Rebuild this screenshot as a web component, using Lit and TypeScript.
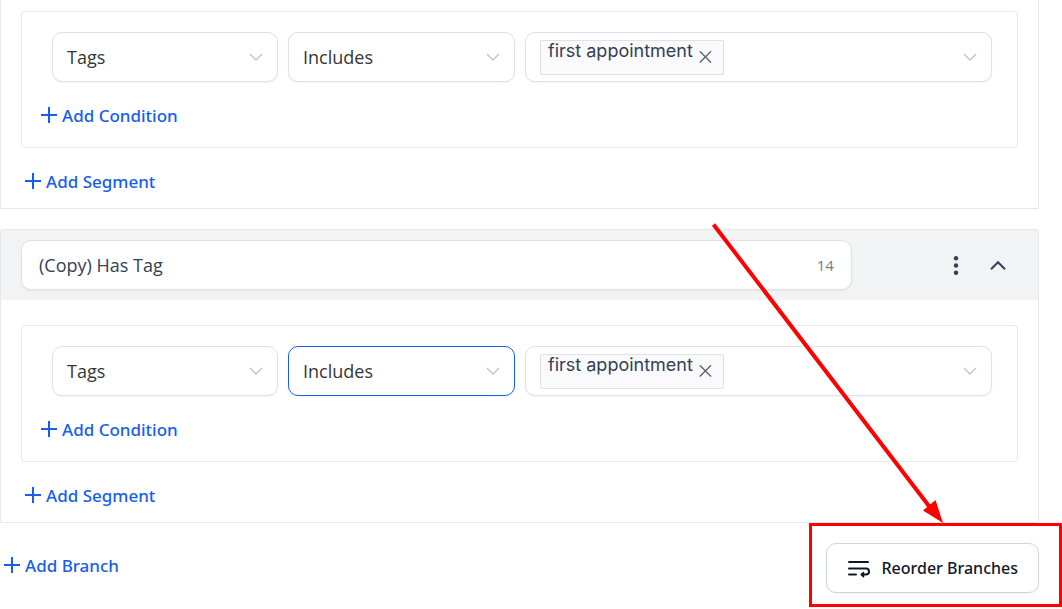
import { LitElement, html, css, svg, nothing } from "lit";
import { customElement, property } from "lit/decorators.js";

const chevronDown = svg`<path d="M1 1l6 6 6-6" />`;

@customElement("add-link")
export class AddLink extends LitElement {
  @property() label = "";

  static styles = css`
    :host {
      display: block;
    }
    .add {
      display: flex;
      align-items: center;
      gap: 5px;
      height: 27px;
      padding: 0;
      border: 0;
      background: none;
      color: #155eef;
      font: 500 17px/27px "Noto Sans", "Open Sans", sans-serif;
      cursor: pointer;
    }
    .plus {
      width: 16px;
      height: 18px;
      fill: none;
      stroke: currentColor;
      stroke-width: 2;
    }
  `;

  render() {
    return html`<button class="add" type="button">
      <svg class="plus" viewBox="0 0 16 18" aria-hidden="true">
        <path d="M8 0v16M0 8h16" />
      </svg>
      <span>${this.label}</span>
    </button>`;
  }
}

@customElement("select-field")
export class SelectField extends LitElement {
  @property() label = "";
  @property() value = "";
  @property({ type: Boolean }) active = false;

  static styles = css`
    :host {
      display: block;
    }
    .field {
      display: grid;
      align-items: center;
    }
    .select {
      grid-area: 1 / 1;
      appearance: none;
      box-sizing: border-box;
      width: 100%;
      height: 50px;
      padding: 0 40px 0 14px;
      border: 1px solid #e0e0e6;
      border-radius: 10px;
      background: #fff;
      box-shadow: 0 1px 2px rgba(16, 24, 40, 0.05);
      color: #333639;
      font: 400 18px/26px "Open Sans", "Noto Sans", sans-serif;
      outline: none;
    }
    .select.active {
      border-color: #155eef;
    }
    .chevron {
      grid-area: 1 / 1;
      justify-self: end;
      width: 14px;
      height: 8px;
      margin-right: 15px;
      fill: none;
      stroke: #c2c2c2;
      stroke-width: 1.3;
      pointer-events: none;
    }
  `;

  render() {
    return html`<div class="field">
      <select class="select ${this.active ? "active" : ""}" aria-label=${this.label}>
        <option selected>${this.value}</option>
      </select>
      <svg class="chevron" viewBox="0 0 14 8" aria-hidden="true">${chevronDown}</svg>
    </div>`;
  }
}

@customElement("tag-field")
export class TagField extends LitElement {
  @property() value = "";

  static styles = css`
    :host {
      display: block;
    }
    .field {
      display: flex;
      align-items: center;
      justify-content: space-between;
      box-sizing: border-box;
      height: 50px;
      padding: 0 14px;
      border: 1px solid #e0e0e6;
      border-radius: 10px;
      background: #fff;
      box-shadow: 0 1px 2px rgba(16, 24, 40, 0.05);
    }
    .tag {
      display: flex;
      gap: 6px;
      box-sizing: border-box;
      height: 35px;
      padding: 0 11px 0 7px;
      border: 1px solid #e0e0e6;
      border-radius: 2px;
      background: #fafafc;
      color: #344054;
      font: 400 18px/20px "Inter", "Roboto", sans-serif;
    }
    .remove,
    .open {
      display: flex;
      align-items: center;
      padding: 0;
      border: 0;
      background: none;
      cursor: pointer;
    }
    .cross {
      width: 13px;
      height: 13px;
      fill: none;
      stroke: #606266;
      stroke-width: 1.4;
    }
    .chevron {
      width: 14px;
      height: 8px;
      fill: none;
      stroke: #c2c2c2;
      stroke-width: 1.3;
    }
  `;

  render() {
    return html`<div class="field">
      <span class="tag">
        <span>${this.value}</span>
        <button class="remove" type="button" aria-label="Remove">
          <svg class="cross" viewBox="0 0 13 13" aria-hidden="true">
            <path d="M.8 .3l11.200 11.200M12 .3L.8 11.500" />
          </svg>
        </button>
      </span>
      <button class="open" type="button" aria-label="Open tags">
        <svg class="chevron" viewBox="0 0 14 8" aria-hidden="true">${chevronDown}</svg>
      </button>
    </div>`;
  }
}

@customElement("branch-card")
export class BranchCard extends LitElement {
  @property() name = "";
  @property({ type: Boolean }) active = false;

  static styles = css`
    :host {
      display: block;
    }
    .card {
      border: 1px solid #e4e7ec;
      border-radius: 2px;
    }
    .card.continued {
      border-top: 0;
      border-top-left-radius: 0;
      border-top-right-radius: 0;
    }
    .header {
      display: grid;
      grid-template-columns: 5fr 1fr;
      padding: 10px 20px;
      background: #f2f3f5;
    }
    .name {
      display: flex;
      align-items: center;
      box-sizing: border-box;
      height: 50px;
      padding: 0 17px;
      border: 1px solid #e0e0e6;
      border-radius: 10px;
      background: #fff;
      box-shadow: 0 1px 2px rgba(16, 24, 40, 0.05);
    }
    .input {
      flex: 1;
      min-width: 0;
      padding: 0;
      border: 0;
      outline: none;
      background: none;
      color: #344054;
      font: 400 18px/26px "Open Sans", "Noto Sans", sans-serif;
    }
    .count {
      color: #767c82;
      font: 400 15px/26px "Open Sans", "Noto Sans", sans-serif;
    }
    .actions {
      display: flex;
      align-items: center;
      justify-content: flex-end;
      gap: 22px;
      padding-right: 10px;
    }
    .icon {
      display: flex;
      padding: 0;
      border: 0;
      background: none;
      color: #344054;
      cursor: pointer;
    }
    .dots {
      width: 20px;
      height: 20px;
      fill: currentColor;
    }
    .up {
      width: 20px;
      height: 20px;
      fill: none;
      stroke: currentColor;
      stroke-width: 2;
    }
    .body {
      padding: 25px 20px 13px;
    }
    .continued .body {
      padding-top: 11px;
    }
    .segment {
      padding: 20px 25px 18px 19px;
      border: 1px solid #e5e7eb;
      border-radius: 4px;
    }
    .row {
      display: grid;
      grid-template-columns: 226fr 227fr 467fr;
      gap: 10px;
      padding: 0 0 20px 11px;
    }
    .more {
      padding: 20px 0 0 4px;
    }
  `;

  render() {
    return html`<section class="card ${this.name ? "" : "continued"}">
      ${this.name
        ? html`<header class="header">
            <div class="name">
              <input class="input" aria-label="Branch name" .value=${this.name} />
              <span class="count">${this.name.length}</span>
            </div>
            <div class="actions">
              <button class="icon" type="button" aria-label="Branch menu">
                <svg class="dots" viewBox="0 0 20 20" aria-hidden="true">
                  <circle cx="10" cy="3.200" r="2.200" />
                  <circle cx="10" cy="10.500" r="2.200" />
                  <circle cx="10" cy="17.800" r="2.200" />
                </svg>
              </button>
              <button class="icon" type="button" aria-label="Collapse branch">
                <svg class="up" viewBox="0 0 20 20" aria-hidden="true">
                  <path d="M3 14.200l7-7 7 7" />
                </svg>
              </button>
            </div>
          </header>`
        : nothing}
      <div class="body">
        <div class="segment">
          <div class="row">
            <select-field label="Field" value="Tags"></select-field>
            <select-field label="Operator" value="Includes" ?active=${this.active}></select-field>
            <tag-field value="first appointment"></tag-field>
          </div>
          <add-link label="Add Condition"></add-link>
        </div>
        <div class="more"><add-link label="Add Segment"></add-link></div>
      </div>
    </section>`;
  }
}

@customElement("app-root")
export class AppRoot extends LitElement {
  static styles = css`
    :host {
      display: block;
      background: #fff;
    }
    .page {
      display: flex;
      flex-direction: column;
      gap: 20px;
      padding: 0 23px 16px 0;
    }
    .footer {
      display: flex;
      align-items: flex-start;
      justify-content: space-between;
    }
    .branch {
      padding: 9px 0 0 4px;
    }
    .target {
      position: relative;
    }
    .reorder {
      display: flex;
      align-items: center;
      gap: 11px;
      height: 50px;
      padding: 0 20px;
      border: 1px solid #d0d5dd;
      border-radius: 10px;
      background: #fff;
      box-shadow: 0 1px 2px rgba(16, 24, 40, 0.05);
      color: #101828;
      font: 500 16px/26px "Noto Sans", "Open Sans", sans-serif;
      cursor: pointer;
    }
    .wrap {
      width: 24px;
      height: 20px;
      fill: none;
      stroke: currentColor;
      stroke-width: 2;
      stroke-linecap: round;
      stroke-linejoin: round;
    }
    .frame {
      position: absolute;
      inset: -20px -23px -14px -17px;
      border: 3px solid #f00;
      pointer-events: none;
    }
    .arrow {
      position: absolute;
      right: 94px;
      bottom: 69px;
      width: 234px;
      height: 303px;
      pointer-events: none;
    }
  `;

  render() {
    return html`<main class="page">
      <branch-card></branch-card>
      <branch-card name="(Copy) Has Tag" active></branch-card>
      <footer class="footer">
        <add-link class="branch" label="Add Branch"></add-link>
        <div class="target">
          <button class="reorder" type="button">
            <svg class="wrap" viewBox="0 0 24 20" aria-hidden="true">
              <path d="M2 4h19M2 10.500h17a3 3 0 0 1 0 6h-4M2 16.500h7" />
              <path d="M16.500 14.500l-2.300 2.100 2.300 2.100z" fill="currentColor" stroke-width="1.500" />
            </svg>
            <span>Reorder Branches</span>
          </button>
          <div class="frame"></div>
          <svg class="arrow" viewBox="0 0 234 303" aria-hidden="true">
            <path d="M2.500 3.500L221 289" fill="none" stroke="#f00" stroke-width="4" />
            <path d="M232 302l-20-12.500 12.500-10.500z" fill="#f00" />
          </svg>
        </div>
      </footer>
    </main>`;
  }
}
